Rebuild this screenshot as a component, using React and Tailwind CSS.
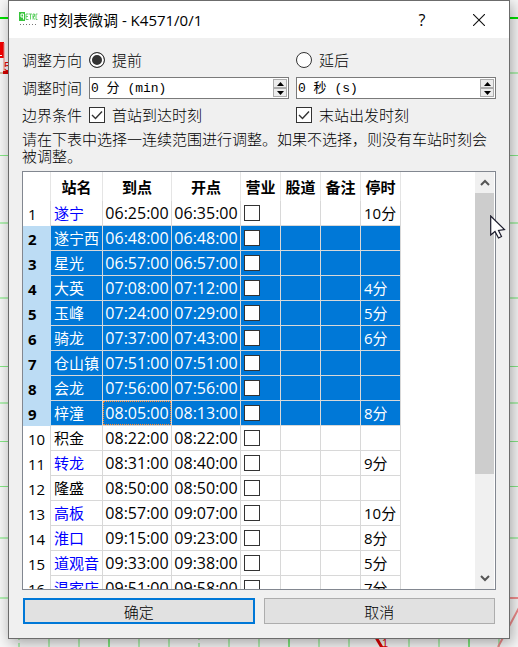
import React, { useState } from "react";

const LATIN = "font-['Open_Sans','Noto_Sans_CJK_SC',sans-serif]";
const SONG = "font-['Noto_Sans_CJK_SC',sans-serif]";

const HEADERS = ["站名", "到点", "开点", "营业", "股道", "备注", "停时"];

const ROWS = [
  { name: "遂宁", arrive: "06:25:00", depart: "06:35:00", stop: "10分" },
  { name: "遂宁西", arrive: "06:48:00", depart: "06:48:00", stop: "" },
  { name: "星光", arrive: "06:57:00", depart: "06:57:00", stop: "" },
  { name: "大英", arrive: "07:08:00", depart: "07:12:00", stop: "4分" },
  { name: "玉峰", arrive: "07:24:00", depart: "07:29:00", stop: "5分" },
  { name: "骑龙", arrive: "07:37:00", depart: "07:43:00", stop: "6分" },
  { name: "仓山镇", arrive: "07:51:00", depart: "07:51:00", stop: "" },
  { name: "会龙", arrive: "07:56:00", depart: "07:56:00", stop: "" },
  { name: "梓潼", arrive: "08:05:00", depart: "08:13:00", stop: "8分" },
  { name: "积金", arrive: "08:22:00", depart: "08:22:00", stop: "" },
  { name: "转龙", arrive: "08:31:00", depart: "08:40:00", stop: "9分" },
  { name: "隆盛", arrive: "08:50:00", depart: "08:50:00", stop: "" },
  { name: "高板", arrive: "08:57:00", depart: "09:07:00", stop: "10分" },
  { name: "淮口", arrive: "09:15:00", depart: "09:23:00", stop: "8分" },
  { name: "道观音", arrive: "09:33:00", depart: "09:38:00", stop: "5分" },
  { name: "温家店", arrive: "09:51:00", depart: "09:58:00", stop: "7分" },
];

const SELECTED_FROM = 1;
const SELECTED_TO = 8;
const CURRENT_ROW = 8;

// Train diagram that shows behind the dialog
function DiagramBackground() {
  const thin = [155, 366, 441, 486];
  const wide = [73, 223, 298, 403, 538];
  const columns = [49, 79, 139, 169, 229, 259, 319, 349, 409, 439, 499];
  return (
    <svg className="absolute inset-0 h-full w-full" viewBox="0 0 518 647" preserveAspectRatio="none" aria-hidden="true">
      {wide.map((y) => (
        <rect key={y} x="0" y={y - 1} width="518" height="2" fill="#b4f0b4" />
      ))}
      {thin.map((y) => (
        <rect key={y} x="0" y={y} width="518" height="1" fill="#86e886" />
      ))}
      <rect x="0" y="17" width="518" height="2" fill="#00e400" />
      <rect x="0" y="597" width="300" height="2" fill="#b4f0b4" />
      <rect x="300" y="597" width="218" height="2" fill="#f49090" />
      {columns.map((x) => (
        <rect key={x} x={x - 1} y="0" width="2" height="647" fill="#b4f0b4" />
      ))}
      {[109, 289, 469].map((x) => (
        <rect key={x} x={x - 1} y="0" width="2" height="647" fill="#80e880" />
      ))}
      {[19, 199].map((x) => (
        <path key={x} d={`M${x} 634V647`} stroke="#b4f0b4" strokeWidth="2" strokeDasharray="6 3" />
      ))}
      <rect x="0" y="42" width="4" height="16" fill="#f40000" />
      <path d="M0 55.500H2" stroke="#fff" />
      <path d="M4 43V73M0 73H9" stroke="#f08080" fill="none" />
      <path d="M374 634L384 651" stroke="#e00000" strokeWidth="3" />
      <path d="M498 647L520 606" stroke="#f08c8c" strokeWidth="2" />
      <rect x="3" y="71" width="6" height="3" fill="#d40000" />
      <text x="4" y="71" fontSize="12" fill="#e00000" fontFamily="Liberation Sans">5</text>
      <text x="382" y="647" fontSize="11" fill="#e00000" fontFamily="Liberation Sans">1</text>
    </svg>
  );
}

function AppLogo() {
  return (
    <svg className="h-[18px] w-5" viewBox="0 0 20 18" aria-hidden="true">
      <rect x="0" y="1" width="6" height="9" fill="#38c43c" />
      <path d="M4.500 8.500V3H2V6H4" stroke="#fff" fill="none" />
      <path d="M9.500 3H7V8.500H9.500M7 5.500H9M10 3H13M11.500 3V8.500M14 8.500V3H15.500V5.500H14L15.500 8.500M18.500 3H17V8.500H18.500" stroke="#55cc5a" strokeWidth="0.900" fill="none" />
      <path d="M1 13.500H17" stroke="#777" strokeDasharray="1 2" />
    </svg>
  );
}

function TitleBar() {
  return (
    <header className="flex h-[37px] shrink-0 items-center bg-white pl-[10px]">
      <AppLogo />
      <h1 className={`ml-1 flex-1 text-[15px] leading-5 text-black ${LATIN}`}>时刻表微调 - K4571/0/1</h1>
      <button type="button" aria-label="帮助" className={`w-10 text-[16px] leading-5 text-black ${LATIN}`}>
        ?
      </button>
      <button type="button" aria-label="关闭" className="ml-[17px] mr-[10px] flex h-8 w-10 items-center justify-center">
        <svg className="h-3 w-3" viewBox="0 0 12 12" aria-hidden="true">
          <path d="M0 0L12 12M12 0L0 12" stroke="#111" strokeWidth="1.100" fill="none" />
        </svg>
      </button>
    </header>
  );
}

function RadioOption({ label, checked, onChange }) {
  return (
    <label className="flex items-center gap-[7px] leading-4">
      <input
        type="radio"
        name="direction"
        checked={checked}
        onChange={onChange}
        className="h-4 w-4 appearance-none rounded-full border border-[#333] bg-white checked:bg-[#333] checked:shadow-[inset_0_0_0_2px_white]"
      />
      {label}
    </label>
  );
}

function CheckOption({ label }) {
  return (
    <label className="grid grid-cols-[16px_auto] items-center justify-start gap-[7px] leading-4">
      <input
        type="checkbox"
        defaultChecked
        className="peer col-start-1 row-start-1 h-4 w-4 appearance-none border border-[#333] bg-white"
      />
      <svg className="pointer-events-none invisible col-start-1 row-start-1 h-4 w-4 peer-checked:visible" viewBox="0 0 16 16" aria-hidden="true">
        <path d="M3 8L6.500 11.500L13 4.500" stroke="#333" strokeWidth="1.400" fill="none" />
      </svg>
      <span className="col-start-2 row-start-1">{label}</span>
    </label>
  );
}

function StepButton({ up, onClick, label }) {
  return (
    <button
      type="button"
      aria-label={label}
      onClick={onClick}
      className="flex min-h-0 flex-1 items-center justify-center border border-[#acacac] bg-[#ececec]"
    >
      <svg className="h-1 w-[7px]" viewBox="0 0 7 4" aria-hidden="true">
        <path d={up ? "M0 4L3.500 0L7 4Z" : "M0 0L3.500 4L7 0Z"} fill="#000" />
      </svg>
    </button>
  );
}

function SpinBox({ label, unit }) {
  const [value, setValue] = useState(0);
  return (
    <div className="flex h-[22px] border border-[#7a7a7a] bg-white p-px">
      <input
        type="text"
        aria-label={label}
        value={`${value} ${unit}`}
        readOnly
        className="min-w-0 flex-1 bg-transparent pt-[2px] text-[13px] font-normal leading-4 text-black outline-none font-['Liberation_Mono','Noto_Sans_CJK_SC',monospace]"
      />
      <div className="flex w-[14px] flex-col">
        <StepButton up label={`${label} +`} onClick={() => setValue(value + 1)} />
        <StepButton label={`${label} -`} onClick={() => setValue(Math.max(0, value - 1))} />
      </div>
    </div>
  );
}

function StationRow({ row, index }) {
  const selected = index >= SELECTED_FROM && index <= SELECTED_TO;
  const cell = "border-b border-r border-[#d8d8d8] p-0";
  const nameColor = selected ? "" : row.stop ? "text-[#0000ff]" : "text-black";
  return (
    <tr className={`h-[25px] ${selected ? "bg-[#0078d7] text-white" : "bg-white text-black"}`}>
      <th
        scope="row"
        className={`p-0 pl-[5px] text-left text-black ${
          selected ? "bg-[#bcdcf4] font-bold" : "border-r border-[#d8d8d8] bg-white font-normal"
        }`}
      >
        {index + 1}
      </th>
      <td className={`${cell} pl-[3px] ${nameColor}`}>{row.name}</td>
      <td className={`${cell} text-[16px]`}>
        <div
          className={`flex h-6 items-center justify-center border ${
            index === CURRENT_ROW ? "border-dotted border-[#ff8728]" : "border-transparent"
          }`}
        >
          {row.arrive}
        </div>
      </td>
      <td className={`${cell} text-center text-[16px]`}>{row.depart}</td>
      <td className={`${cell} pl-[3px]`}>
        <input
          type="checkbox"
          aria-label={`${row.name} 营业`}
          className="block h-4 w-4 appearance-none border border-[#333] bg-white checked:bg-[#333] checked:shadow-[inset_0_0_0_3px_white]"
        />
      </td>
      <td className={cell} />
      <td className={cell} />
      <td className={`${cell} pl-[3px]`}>{row.stop}</td>
    </tr>
  );
}

function StationTable() {
  return (
    <div className="mt-[7px] flex min-h-0 flex-1 border border-[#828790] bg-white pr-px">
      <div className="min-w-0 flex-1 overflow-hidden">
        <table className={`w-[378px] table-fixed border-separate border-spacing-0 text-[15px] font-normal leading-5 ${LATIN}`}>
          <colgroup>
            <col className="w-7" />
            <col className="w-[52px]" />
            <col className="w-[69px]" />
            <col className="w-[69px]" />
            <col className="w-10" />
            <col className="w-10" />
            <col className="w-10" />
            <col className="w-10" />
          </colgroup>
          <thead>
            <tr className="h-[29px] text-black">
              <td className="border-r border-[#e5e5e5] p-0" />
              {HEADERS.map((title) => (
                <th key={title} scope="col" className="border-r border-[#e5e5e5] p-0 text-center font-bold">
                  {title}
                </th>
              ))}
            </tr>
          </thead>
          <tbody>
            {ROWS.map((row, index) => (
              <StationRow key={row.name} row={row} index={index} />
            ))}
          </tbody>
        </table>
      </div>
      <div className="flex w-[19px] shrink-0 flex-col bg-[#f0f0f0]">
        <button type="button" aria-label="向上滚动" className="flex h-[21px] shrink-0 items-center justify-center">
          <svg className="h-[7px] w-[10px]" viewBox="0 0 10 7" aria-hidden="true">
            <path d="M1 6L5 2L9 6" stroke="#555" strokeWidth="2" fill="none" />
          </svg>
        </button>
        <div className="flex min-h-0 flex-1 flex-col">
          <div className="h-3/4 bg-[#cdcdcd]" />
        </div>
        <button type="button" aria-label="向下滚动" className="flex h-[21px] shrink-0 items-center justify-center">
          <svg className="h-[7px] w-[10px]" viewBox="0 0 10 7" aria-hidden="true">
            <path d="M1 1L5 5L9 1" stroke="#555" strokeWidth="2" fill="none" />
          </svg>
        </button>
      </div>
    </div>
  );
}

export default function App() {
  const [forward, setForward] = useState(true);
  return (
    <main className="relative flex h-screen flex-col overflow-hidden bg-[#f8f8f8] px-2 pb-2">
      <DiagramBackground />
      <section
        aria-label="时刻表微调"
        className="relative flex min-h-0 flex-1 flex-col border border-[#6c6c6c] bg-[#f0f0f0] shadow-[2px_4px_14px_0_rgba(0,0,0,0.35)]"
      >
        <TitleBar />
        <form
          onSubmit={(event) => event.preventDefault()}
          className={`flex min-h-0 flex-1 flex-col px-[13px] pb-[14px] pt-3 text-[15px] font-light leading-[17px] text-black ${SONG}`}
        >
          <div className="grid h-5 grid-cols-[60px_1fr_1fr] items-center gap-x-[7px]">
            <span className="leading-4">调整方向</span>
            <RadioOption label="提前" checked={forward} onChange={() => setForward(true)} />
            <RadioOption label="延后" checked={!forward} onChange={() => setForward(false)} />
          </div>
          <div className="mt-[7px] grid grid-cols-[60px_1fr_1fr] items-center gap-x-[7px]">
            <span className="leading-4">调整时间</span>
            <SpinBox label="分" unit="分 (min)" />
            <SpinBox label="秒" unit="秒 (s)" />
          </div>
          <div className="mt-[7px] grid h-[18px] grid-cols-[60px_1fr_1fr] items-center gap-x-[7px]">
            <span className="leading-4">边界条件</span>
            <CheckOption label="首站到达时刻" />
            <CheckOption label="末站出发时刻" />
          </div>
          <p className="mt-[6px]">
            请在下表中选择一连续范围进行调整。如果不选择，则没有车站时刻会被调整。
          </p>
          <StationTable />
          <div className="mt-2 grid grid-cols-2 gap-[9px] px-px">
            <button type="submit" className="h-[26px] border-2 border-[#0078d7] bg-[#e1e1e1]">
              确定
            </button>
            <button type="button" className="h-[26px] border border-[#adadad] bg-[#e1e1e1]">
              取消
            </button>
          </div>
        </form>
      </section>
      <svg className="pointer-events-none absolute left-[490px] top-[215px] h-6 w-4" viewBox="0 0 16 24" aria-hidden="true">
        <path d="M0.700 1V20L5 16.500L8.500 23L11.500 21.500L8.500 15.500L14.500 14.500Z" fill="#fff" stroke="#1a1a2a" strokeWidth="1.200" />
      </svg>
    </main>
  );
}
